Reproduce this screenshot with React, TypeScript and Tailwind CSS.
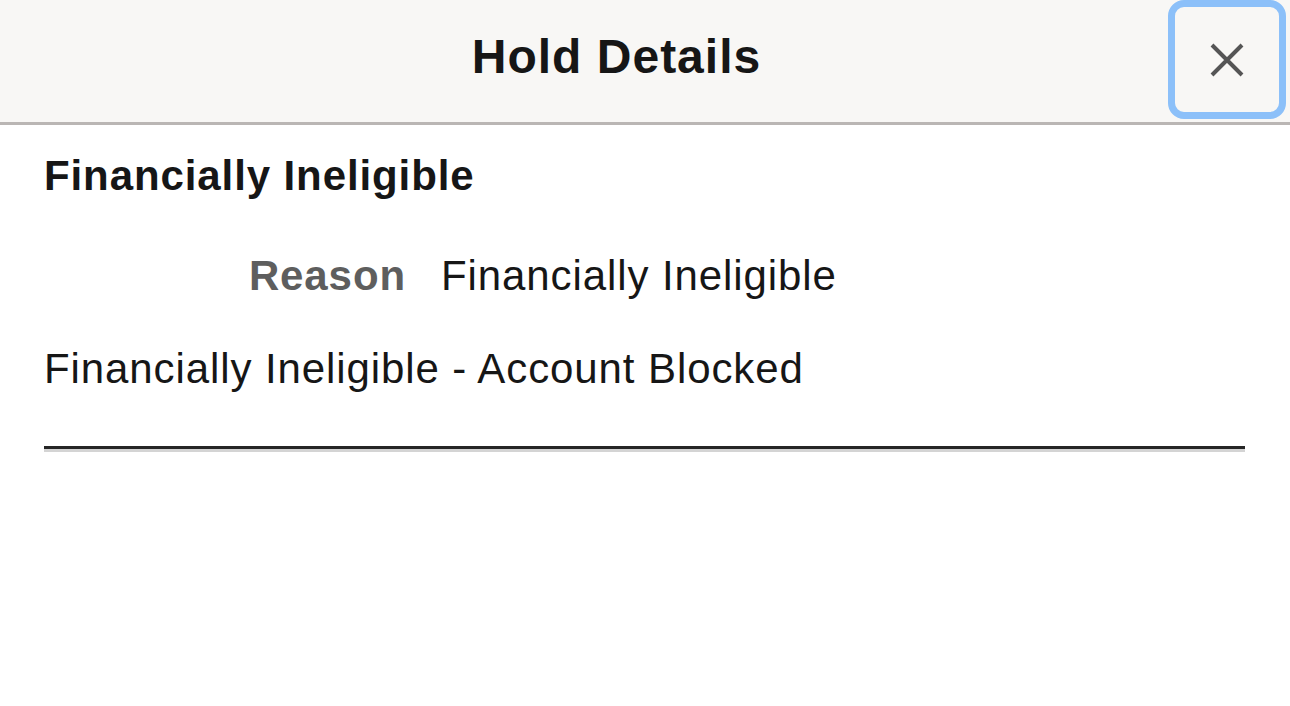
import React from "react";

export default function App() {
  return (
    <div className="w-[1290px] h-[706px] bg-white overflow-hidden" style={{ fontFamily: '"Liberation Sans", Arial, sans-serif' }}>
      <div className="h-[125px] bg-[#f8f7f5] border-b-[3px] border-[#bab6b4] flex items-start pl-[65px] pr-[4px]">
        <div className="flex-1 text-center text-[48px] leading-[54px] font-bold tracking-[1px] text-[#161616] mt-[30px]">Hold Details</div>
        <button className="w-[118px] h-[119px] rounded-[16px] border-[7px] border-[#8cc0f9] bg-[#f8f7f5] flex items-center justify-center">
          <svg width="34" height="34" viewBox="0 0 34 34" fill="none" stroke="#555555" strokeWidth="4" strokeLinecap="butt">
            <path d="M2 2 L32 32 M32 2 L2 32" />
          </svg>
        </button>
      </div>
      <div className="pl-[44px] pr-[45px] text-[#161616] tracking-[0.9px]">
        <div className="mt-[27px] text-[42px] leading-[47px] font-bold">Financially Ineligible</div>
        <div className="mt-[53px] flex text-[42px] leading-[47px]">
          <div className="w-[362px] text-right font-bold text-[#5e5e5e]">Reason</div>
          <div className="ml-[35px]">Financially Ineligible</div>
        </div>
        <div className="mt-[46px] text-[42px] leading-[47px]">Financially Ineligible - Account Blocked</div>
        <div className="mt-[54px] border-t-[3px] border-t-[#262626] border-b-[3px] border-b-[#d4d4d4]" />
      </div>
    </div>
  );
}
